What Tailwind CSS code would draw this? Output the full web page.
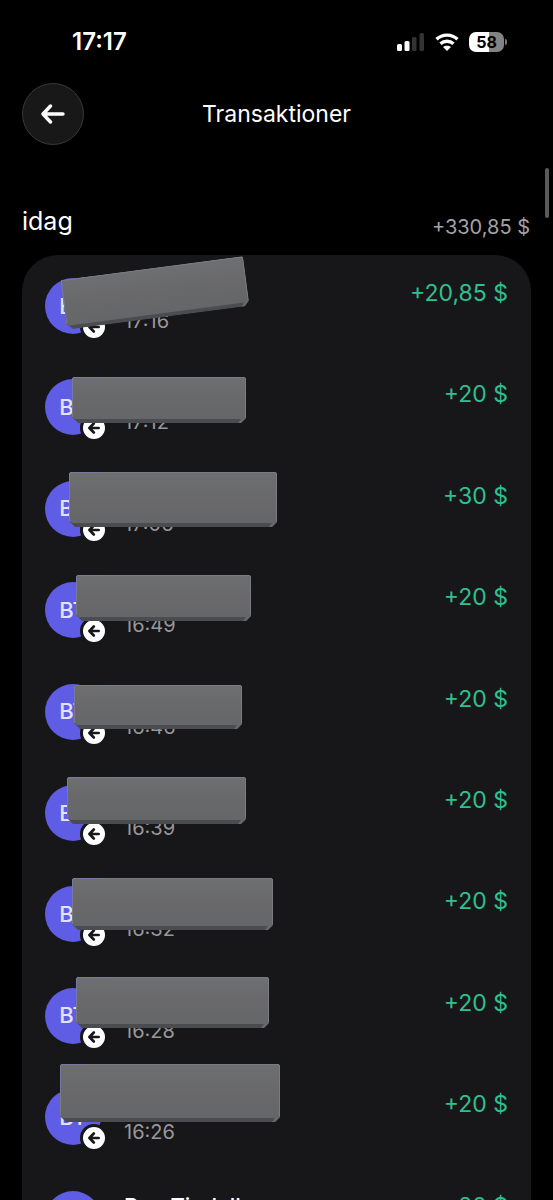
<!DOCTYPE html>
<html lang="sv">
<head>
    <meta charset="UTF-8">
    <meta name="viewport" content="width=device-width, initial-scale=1.0">
    <title>Transaktioner</title>
    <script src="https://cdn.jsdelivr.net/npm/@tailwindcss/browser@4"></script>
</head>
<body class="bg-black text-white font-['Inter',sans-serif]">
<div class="relative h-screen overflow-hidden">
    <!-- Status bar -->
    <header class="flex items-center justify-between pt-6 pl-[72px] pr-[46px]">
        <span class="text-[24px] leading-9 font-semibold">17:17</span>
        <div class="flex items-center gap-2.5">
            <svg class="w-[28px] h-[18px]" viewBox="0 0 28 18">
                <rect x="0" y="11" width="5" height="7" rx="1.5" fill="#fff"/>
                <rect x="7.500" y="8" width="5" height="10" rx="1.5" fill="#fff"/>
                <rect x="15" y="4" width="4.500" height="14" rx="1.500" fill="#333"/>
                <rect x="22.500" y="0" width="4.500" height="18" rx="1.500" fill="#333"/>
            </svg>
            <svg class="w-6 h-[18px]" viewBox="0 0 24 18" fill="none" stroke="#fff" stroke-width="3.400">
                <path d="M1.500 6.300C7.300.700 16.700.700 22.500 6.300"/>
                <path d="M5.500 10.800C9.200 7.400 14.800 7.400 18.500 10.800"/>
                <path d="M12 18L8 14.100C10.300 12.200 13.700 12.200 16 14.100Z" fill="#fff" stroke="none"/>
            </svg>
            <div class="flex items-center gap-px">
                <span class="w-[35px] h-5 rounded-[7px] bg-linear-to-r from-white from-58% to-[#838383] to-58% text-black text-[16px] leading-5 font-bold text-center">58</span>
                <span class="w-0.5 h-1.5 rounded-r-full bg-[#777]"></span>
            </div>
        </div>
    </header>

    <!-- Title bar -->
    <nav class="grid grid-cols-[62px_1fr_62px] items-center mt-[23px] px-[22px]">
        <button type="button" aria-label="Tillbaka" class="flex items-center justify-center size-[62px] rounded-full bg-[#181818] border border-[#383838]">
            <svg class="w-6 h-5" viewBox="0 0 24 20" fill="none" stroke="#fff" stroke-width="3.400" stroke-linecap="round" stroke-linejoin="round">
                <path d="M22 10H2.500M9.500 2L2 10L9.500 18"/>
            </svg>
        </button>
        <h1 class="text-center text-[23px] leading-8">Transaktioner</h1>
    </nav>

    <main class="px-[22px] mt-[58px]">
        <div class="flex items-end justify-between pr-px">
            <h2 class="text-[25px] leading-9">idag</h2>
            <p class="text-[20px] leading-6 text-[#a3a3a6]">+330,85 $</p>
        </div>
        <section class="mt-4 px-[23px] pt-[23px] rounded-t-[36px] bg-[#171719]">
            <ul id="transactions" class="grid auto-rows-fr h-[1014px]"></ul>
        </section>
    </main>

    <!-- Scroll indicator -->
    <div class="absolute right-1 top-[168px] w-1 h-[50px] rounded-full bg-[#5a5a5a]"></div>
</div>

<script>
    // cover: [left, top, width, height, rotation] of the slab over the name
    const transactions = [
        { time: "17:16", amount: "+20,85 $", cover: [18, -10, 184, 50, -7.5] },
        { time: "17:12", amount: "+20 $", cover: [27, -2, 174, 46, 0] },
        { time: "17:06", amount: "+30 $", cover: [24, -9, 208, 55, 0] },
        { time: "16:49", amount: "+20 $", cover: [31, -7, 175, 46, 0] },
        { time: "16:46", amount: "+20 $", cover: [29, 1, 168, 44, 0] },
        { time: "16:39", amount: "+20 $", cover: [22, -8, 179, 47, 0] },
        { time: "16:32", amount: "+20 $", cover: [27, -8, 201, 52, 0] },
        { time: "16:28", amount: "+20 $", cover: [31, -11, 193, 51, 0] },
        { time: "16:26", amount: "+20 $", cover: [15, -25, 220, 58, 0] },
        { name: "Ben Tindall", time: "16:22", amount: "+20 $" }
    ];

    function coverHtml([left, top, w, h, angle]) {
        return `
            <svg class="absolute" style="left:${left}px;top:${top}px;width:${w}px;height:${h}px;transform:rotate(${angle}deg)" viewBox="0 0 ${w} ${h}">
                <path d="M1.500 0H${w - 1.5}L${w} 1.500V${h - 5}L${w - 5} ${h}H6L0 ${h - 6}V1.500Z" fill="#4b4c4f"/>
                <path d="M${w} ${h - 7}V${h - 5}L${w - 5} ${h}H${w - 8}L${w - 5} ${h - 4}Z" fill="#68696b"/>
                <path d="M1.500 0H${w - 1.5}L${w} 1.500V${h - 6}L${w - 3} ${h - 4}H3L0 ${h - 6}V1.500Z" fill="url(#slab)"/>
                <path d="M0.500 ${h - 6}V1.500L1.500 0.500H${w - 1.5}L${w - 0.5} 1.500V${h - 6}" fill="none" stroke="#7b7c80"/>
                <path d="M0.500 ${h / 2}V1.500L1.500 0.500H30" fill="none" stroke="#7779a0"/>
            </svg>`;
    }

    document.getElementById("transactions").innerHTML = transactions.map(t => `
        <li class="relative flex items-start gap-[23px]">
            <div class="relative flex items-center justify-center size-14 shrink-0 rounded-full bg-[#5f5ce6] text-[#e4e3ff] text-[22px] font-medium">
                BT
                <span class="absolute -right-[7px] -bottom-[7px] flex items-center justify-center size-7 rounded-full border-3 border-[#171719] bg-white">
                    <svg class="w-3 h-3" viewBox="0 0 12 12" fill="none" stroke="#171719" stroke-width="2.600" stroke-linecap="round" stroke-linejoin="round">
                        <path d="M10.700 6H2M5.800 1.500L1.400 6L5.800 10.500"/>
                    </svg>
                </span>
            </div>
            <div class="flex-1 pt-px">
                <p class="h-7 text-[22px] leading-7 font-medium">${t.name || ""}</p>
                <p class="text-[20px] leading-7 text-[#98989c]">${t.time}</p>
            </div>
            <p class="pt-px text-[23px] leading-7 text-[#2fc08f]">${t.amount}</p>
            ${t.cover ? coverHtml(t.cover) : ""}
        </li>`).join("");
</script>

<svg class="absolute size-0" aria-hidden="true">
    <linearGradient id="slab" x1="0" y1="0" x2="0" y2="1">
        <stop offset="0" stop-color="#6e6f71"/>
        <stop offset="0.500" stop-color="#69696b"/>
        <stop offset="1" stop-color="#656668"/>
    </linearGradient>
</svg>
</body>
</html>
